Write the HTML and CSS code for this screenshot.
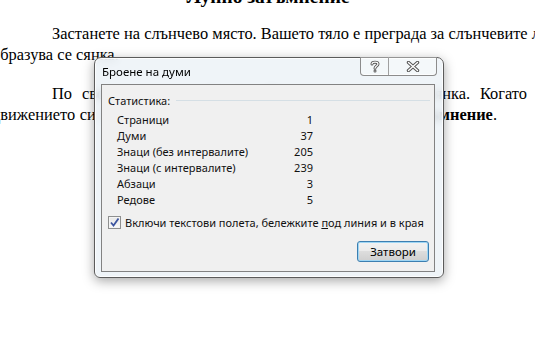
FILE: index.html
```html
<!DOCTYPE html>
<html lang="bg">
  <head>
    <meta charset="UTF-8" />
    <meta name="viewport" content="width=device-width, initial-scale=1.0" />
    <title>Броене на думи</title>
    <link rel="stylesheet" href="styles.css">
  </head>
  <body>
    <div class="doc">
      <h1 class="title">Лунно затъмнение</h1>
      <p class="para">
        <span class="line first">Застанете на слънчево място. Вашето тяло е преграда за слънчевите лъчи и</span>
        <span class="line">образува се сянка.</span>
      </p>
      <p class="para">
        <span class="line first just">По своя път около Земята Луната също хвърля сянка. Когато</span>
        <span class="line just end">движението си Луната закрива Слънцето и идва <b>слънчево затъмнение</b>.</span>
      </p>
    </div>

    <div class="dialog">
      <div class="titlebar">
        <span class="caption">Броене на думи</span>
        <div class="caption-btns">
          <span class="cbtn help">
            <svg width="10" height="13" viewBox="0 0 10 13">
              <path d="M2 4 C2 1.5 8 1.5 8 4 C8 6 5 6 5 8.2" fill="none" stroke="#555" stroke-width="3" stroke-linecap="round"/>
              <circle cx="5" cy="11" r="1.5" fill="#555"/>
              <path d="M2 4 C2 1.5 8 1.5 8 4 C8 6 5 6 5 8.2" fill="none" stroke="#fff" stroke-width="1.2" stroke-linecap="round"/>
              <circle cx="5" cy="11" r="0.6" fill="#fff"/>
            </svg>
          </span>
          <span class="cbtn close">
            <svg width="14" height="11" viewBox="0 0 14 11">
              <path d="M2.5 1.5 L11.5 9.5 M11.5 1.5 L2.5 9.5" fill="none" stroke="#555" stroke-width="3.4" stroke-linecap="round"/>
              <path d="M2.5 1.5 L11.5 9.5 M11.5 1.5 L2.5 9.5" fill="none" stroke="#fff" stroke-width="1.4" stroke-linecap="round"/>
            </svg>
          </span>
        </div>
      </div>

      <div class="client">
        <div class="group">
          <span class="group-label">Статистика:</span>
          <span class="group-rule"></span>
        </div>
        <div class="stats">
          <span>Страници</span><span class="num">1</span>
          <span>Думи</span><span class="num">37</span>
          <span>Знаци (без интервалите)</span><span class="num">205</span>
          <span>Знаци (с интервалите)</span><span class="num">239</span>
          <span>Абзаци</span><span class="num">3</span>
          <span>Редове</span><span class="num">5</span>
        </div>
        <label class="check">
          <span class="box">
            <svg width="11" height="11" viewBox="0 0 11 11">
              <path d="M2 5.5 L4.5 8.5 L9.5 1.5" fill="none" stroke="#3d55a0" stroke-width="1.8"/>
            </svg>
          </span>
          <span class="check-text">Включи текстови полета, бележките <u>п</u>од линия и в края</span>
        </label>
        <div class="actions">
          <button class="btn">Затвори</button>
        </div>
      </div>
    </div>
  </body>
</html>
```

FILE: styles.css
```css
* {
  margin: 0;
  padding: 0;
  box-sizing: border-box;
}
body {
  width: 535px;
  height: 337px;
  overflow: hidden;
  background: #fff;
  font-family: "Liberation Serif", "Times New Roman", serif;
  color: #000;
  position: relative;
}
.doc {
  margin-left: -8px;
  width: 535px;
}
.title {
  font-size: 19.5px;
  line-height: 20px;
  text-align: center;
  width: 552px;
  margin-top: -13px;
}
.para {
  font-size: 16.4px;
  line-height: 20.5px;
  margin-top: 17px;
}
.para + .para {
  margin-top: 19px;
}
.line {
  display: block;
  white-space: nowrap;
}
.line.first {
  text-indent: 60px;
}
.line.just {
  white-space: normal;
  text-align: justify;
  text-align-last: justify;
}
.line.end {
  width: 505px;
}

/* dialog */
.dialog {
  position: absolute;
  left: 94px;
  top: 57px;
  width: 350px;
  height: 221px;
  border: 1px solid #5b5b5b;
  border-radius: 7px 7px 6px 6px;
  background: rgba(236, 241, 246, 0.82);
  backdrop-filter: blur(4px);
  box-shadow: inset 0 0 0 1px rgba(255, 255, 255, 0.8), 0 3px 12px rgba(0, 0, 0, 0.35);
  display: flex;
  flex-direction: column;
  font-family: "Noto Sans", "Open Sans", sans-serif;
  font-size: 11px;
  color: #111;
}
.titlebar {
  height: 26px;
  display: flex;
  align-items: flex-start;
  padding-left: 7px;
}
.caption {
  margin-top: 6px;
  font-size: 11.5px;
  color: #000;
}
.caption-btns {
  margin-left: auto;
  margin-right: 6px;
  margin-top: -1px;
  display: flex;
  height: 19px;
  border: 1px solid #8c8c8c;
  border-top: none;
  border-radius: 0 0 4px 4px;
  background: rgba(255, 255, 255, 0.35);
  box-shadow: inset 0 -1px 0 rgba(255, 255, 255, 0.7);
}
.cbtn {
  display: flex;
  align-items: center;
  justify-content: center;
  height: 100%;
}
.cbtn.help {
  width: 28px;
  border-right: 1px solid #a0a0a0;
}
.cbtn.close {
  width: 47px;
}

.client {
  flex: 1;
  margin: 0 8px 5px 6px;
  border: 1px solid #828282;
  background: #f0f0f0;
  padding: 8px 5px 0 6px;
}
.group {
  display: flex;
  align-items: center;
  gap: 6px;
}
.group-rule {
  flex: 1;
  height: 1px;
  background: #d5dfe5;
  margin-right: -1px;
}
.stats {
  display: grid;
  grid-template-columns: 150px 46px;
  grid-auto-rows: 16px;
  align-items: center;
  padding-left: 9px;
  margin-top: 3px;
}
.num {
  text-align: right;
}
.check {
  display: flex;
  align-items: center;
  gap: 4px;
  margin-top: 7px;
  height: 16px;
}
.check-text {
  white-space: nowrap;
}
.box {
  width: 13px;
  height: 13px;
  border: 1px solid #8e8f8f;
  background: linear-gradient(#e6e6e6, #fbfbfb);
  box-shadow: inset 0 0 0 1px #f4f4f4;
  display: flex;
  align-items: center;
  justify-content: center;
}
.actions {
  display: flex;
  justify-content: flex-end;
  margin-top: 11px;
}
.btn {
  width: 72px;
  height: 21px;
  border: 1px solid #3c7fb1;
  border-radius: 3px;
  background: linear-gradient(#f2f2f2, #ebebeb 45%, #dddddd 50%, #cfcfcf);
  box-shadow: inset 0 0 0 1px #9fd6f4;
  font-family: "Noto Sans", "Open Sans", sans-serif;
  font-size: 11.5px;
  color: #000;
}
```
